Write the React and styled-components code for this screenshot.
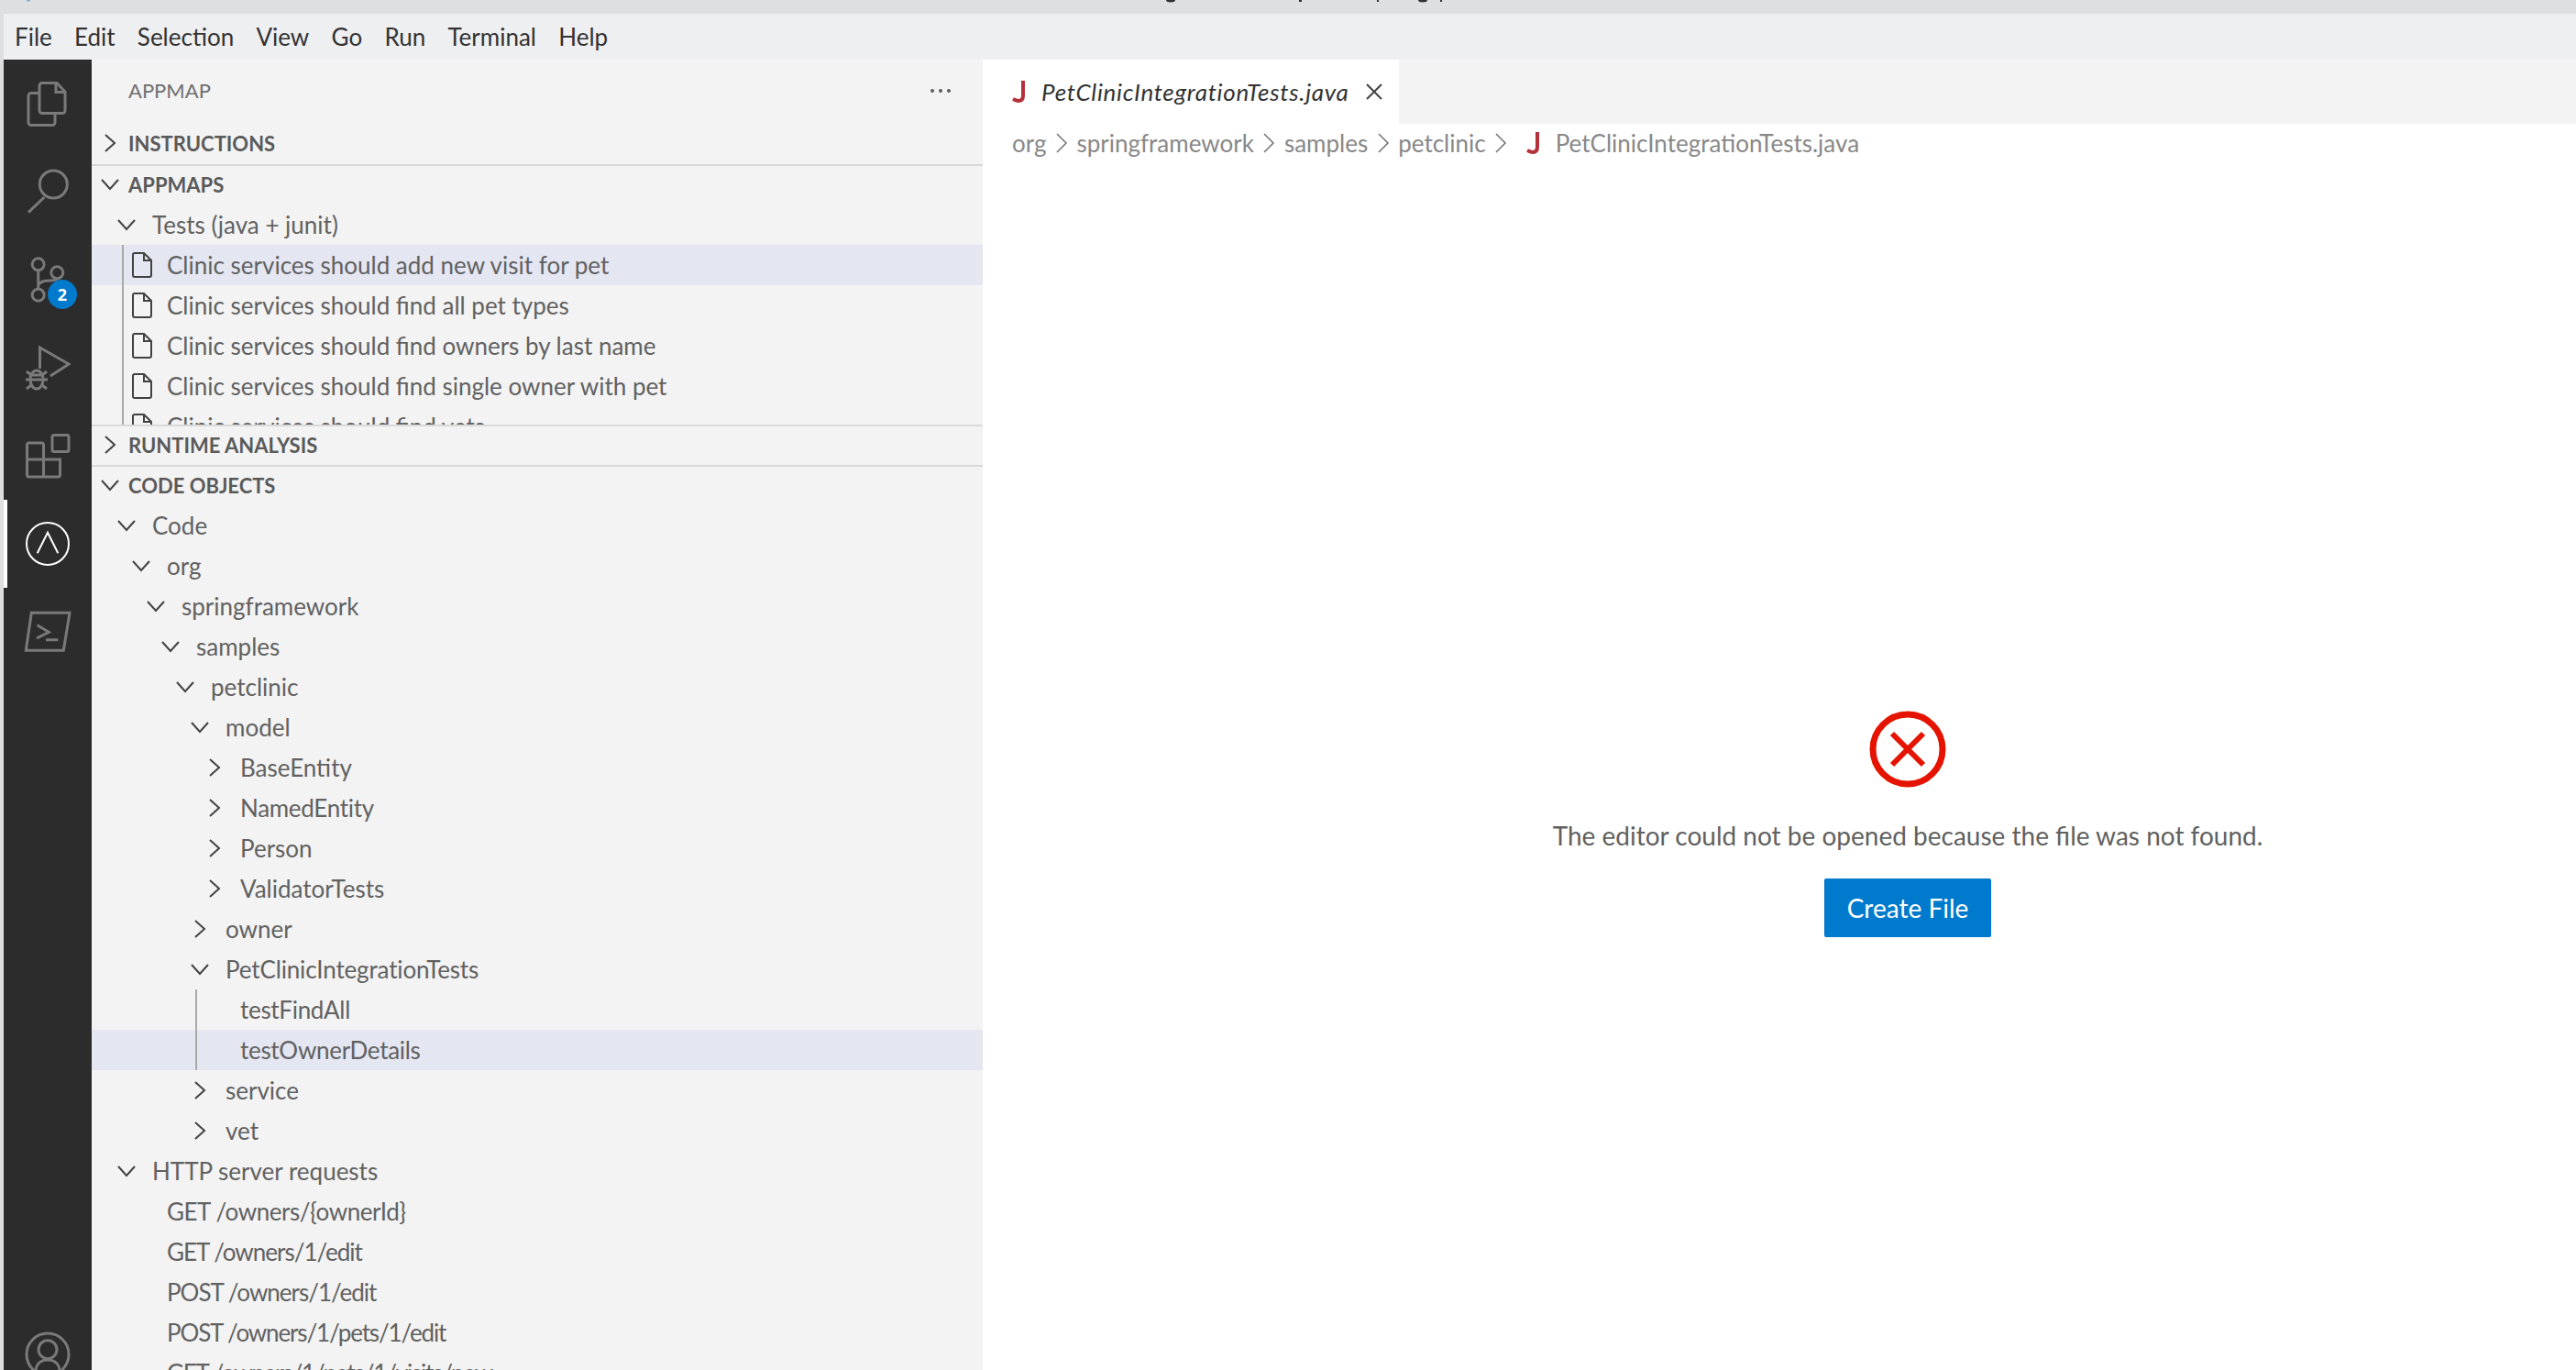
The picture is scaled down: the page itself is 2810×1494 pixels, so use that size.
import React from "react";
import styled, { createGlobalStyle } from "styled-components";

const Global = createGlobalStyle`
  html, body { margin: 0; padding: 0; background: #fff; overflow: hidden; }
  * { box-sizing: border-box; }
`;

const Window = styled.div`
  width: 2810px;
  height: 1494px;
  overflow: hidden;
  display: flex;
  flex-direction: column;
  background: #dedfe1;
  font-family: Lato, "Open Sans", sans-serif;
`;
const TitleBar = styled.div`
  height: 15px;
  flex: none;
  svg { display: block; }
`;
const Main = styled.div`
  flex: 1;
  min-height: 0;
  margin-left: 4px;
  display: flex;
  flex-direction: column;
`;
const MenuBar = styled.div`
  height: 50px;
  flex: none;
  display: flex;
  align-items: center;
  padding-left: 12px;
  gap: 24.25px;
  background: #eeeff1;
  color: #333;
  font-size: 26px;
`;
const Body = styled.div`
  flex: 1;
  min-height: 0;
  display: flex;
`;

const ActivityBar = styled.div`
  width: 96px;
  flex: none;
  background: #2c2c2c;
  display: flex;
  flex-direction: column;
  justify-content: space-between;
  overflow: hidden;
`;
const ActivityItem = styled.div`
  position: relative;
  height: 96px;
  display: flex;
  align-items: center;
  justify-content: center;
  color: ${p => (p.$active ? "#fff" : "#7a7a7a")};
  border-left: ${p => (p.$active ? "4px solid #fff" : "none")};
  padding-right: ${p => (p.$active ? "4px" : "0")};
`;
const AccountSlot = styled.div`
  margin-bottom: -31px;
`;
const Badge = styled.span`
  position: absolute;
  left: 48px;
  top: 48px;
  width: 32px;
  height: 32px;
  border-radius: 50%;
  background: #007acc;
  color: #fff;
  font: 700 18px "Open Sans", sans-serif;
  display: flex;
  align-items: center;
  justify-content: center;
`;

const Sidebar = styled.div`
  width: 972px;
  flex: none;
  background: #f3f3f3;
  color: #616161;
  font-size: 26px;
  overflow: hidden;
`;
const SidebarTitle = styled.div`
  height: 70px;
  display: flex;
  align-items: center;
  justify-content: space-between;
  padding: 0 35px 3px 40px;
  font-size: 22px;
  color: #6f6f6f;
`;
const Dots = styled.span`
  display: flex;
  gap: 5px;
  i {
    width: 4px;
    height: 4px;
    border-radius: 50%;
    background: #5a5a5a;
  }
`;
const PaneHeader = styled.div`
  height: 44px;
  display: flex;
  align-items: center;
  padding: 0 0 2px 10px;
  border-top: ${p => (p.$first ? "none" : "2px solid #d9d9d9")};
  font-size: 22px;
  font-weight: 700;
  color: #5a5a5a;
`;
const PaneBody = styled.div`
  height: ${p => (p.$height ? `${p.$height}px` : "auto")};
  overflow: hidden;
`;
const Row = styled.div`
  position: relative;
  height: 44px;
  display: flex;
  align-items: center;
  white-space: nowrap;
  padding-left: ${p => p.$depth * 16 + 12}px;
  padding-bottom: 1px;
  letter-spacing: ${p => p.$tracking || 0}px;
  background: ${p => (p.$selected ? "#e4e6f1" : "transparent")};
`;
const Twistie = styled.span`
  width: 38px;
  flex: none;
  padding-right: 18px;
  display: flex;
  align-items: center;
  justify-content: center;
  svg { flex: none; }
`;
const HeaderTwistie = styled(Twistie)`
  width: 30px;
  padding-right: 10px;
`;
const FileGlyph = styled.span`
  display: flex;
  width: 38px;
  flex: none;
`;
const Guide = styled.span`
  position: absolute;
  top: 0;
  bottom: 0;
  left: ${p => p.$left}px;
  width: 2px;
  background: #aaa;
`;

const Editor = styled.div`
  flex: 1;
  min-width: 0;
  background: #fff;
  display: flex;
  flex-direction: column;
`;
const TabStrip = styled.div`
  height: 70px;
  flex: none;
  display: flex;
  background: #f3f3f3;
`;
const Tab = styled.div`
  width: 454px;
  background: #fff;
  display: flex;
  align-items: center;
  padding-left: 32px;
  font-size: 26px;
  font-style: italic;
  letter-spacing: 0.7px;
  color: #333;
  white-space: nowrap;
`;
const TabLabel = styled.span`
  margin-left: 16px;
  width: 354px;
`;
const Crumbs = styled.div`
  height: 44px;
  flex: none;
  display: flex;
  align-items: center;
  padding: 0 0 2px 32px;
  font-size: 26px;
  color: #888;
  white-space: nowrap;
  svg { flex: none; }
`;
const CrumbSep = styled.span`
  display: flex;
  width: 33px;
  justify-content: center;
`;
const CrumbIcon = styled.span`
  display: flex;
  margin: 0 16px 0 11px;
`;
const Placeholder = styled.div`
  flex: 1;
  display: flex;
  flex-direction: column;
  align-items: center;
  padding: 596px 0 0 280px;
`;
const Message = styled.div`
  margin-top: 35px;
  font-size: 28px;
  color: #616161;
  white-space: nowrap;
`;
const CreateButton = styled.button`
  margin-top: 30px;
  width: 182px;
  height: 64px;
  border: 0;
  border-radius: 2px;
  background: #007acc;
  color: #fff;
  font: 28px Lato, sans-serif;
`;

const Down = () => (
  <svg width="20" height="14" viewBox="0 0 20 14" fill="none" stroke="#424242" strokeWidth="2">
    <path d="M1 2l9 10 9-10" />
  </svg>
);
const Right = () => (
  <svg width="14" height="20" viewBox="0 0 14 20" fill="none" stroke="#424242" strokeWidth="2">
    <path d="M2 1l10 9-10 9" />
  </svg>
);
const Crumb = () => (
  <CrumbSep>
    <svg width="14" height="24" viewBox="0 0 14 24" fill="none" stroke="#777" strokeWidth="1.6">
      <path d="M2 2l10 10L2 22" />
    </svg>
  </CrumbSep>
);
const FileIcon = () => (
  <FileGlyph>
    <svg width="22" height="28" viewBox="0 0 22 28" fill="none" stroke="#424242" strokeWidth="2">
      <path d="M3 1h10l8 8v16a2 2 0 0 1-2 2H3a2 2 0 0 1-2-2V3a2 2 0 0 1 2-2z" />
      <path d="M13 1v8h8" />
    </svg>
  </FileGlyph>
);
const JavaJ = () => (
  <svg width="16" height="24" viewBox="0 0 16 24" fill="none" stroke="#b5303a" strokeWidth="4">
    <path d="M12 0v16c0 4-2 6-5 6-2 0-4-1-6-2" />
  </svg>
);

const Icon = ({ children, stroke = 3 }) => (
  <svg width="48" height="48" viewBox="0 0 48 48" fill="none" stroke="currentColor" strokeWidth={stroke} style={{ overflow: "visible" }}>
    {children}
  </svg>
);

const topIcons = [
  <Icon>
    <path d="M14.7 12.6H6a3 3 0 0 0-3 3v29a3 3 0 0 0 3 3h23a3 3 0 0 0 3-3V35" />
    <path d="M18 1.5h16l9 9.5v20.5a3 3 0 0 1-3 3H18a3 3 0 0 1-3-3v-27a3 3 0 0 1 3-3z" />
    <path d="M33 1.5v10h10" />
  </Icon>,
  <Icon>
    <circle cx="30.3" cy="16" r="15" />
    <path d="M20.3 30L3 46.7" />
  </Icon>,
  <Icon>
    <circle cx="13.7" cy="7.3" r="6.5" />
    <circle cx="34.3" cy="16.3" r="6.5" />
    <circle cx="13.7" cy="40.7" r="6.5" />
    <path d="M13.7 14v20M13.7 32c0-6 6-7 12-7 5 0 8-1 8.6-2" />
  </Icon>,
  <Icon>
    <path d="M15.5 25V2L47 20 27 33" />
    <ellipse cx="12" cy="37" rx="7" ry="10" />
    <path d="M0 37h24M1 28l5 4M23 28l-5 4M1 47l5-4M23 47l-5-4M6 32h12" />
  </Icon>,
  <Icon>
    <path d="M3.5 10h14a2 2 0 0 1 2 2v16h18v17a2 2 0 0 1-2 2h-32a2 2 0 0 1-2-2V12a2 2 0 0 1 2-2z" />
    <path d="M1.5 28h18v19" />
    <rect x="29" y="1.5" width="18" height="18" rx="2" />
  </Icon>,
];

// [depth, twistie, label, flag, letter spacing]
const code = [
  [1, "d", "Code"], [2, "d", "org"], [3, "d", "springframework"], [4, "d", "samples"],
  [5, "d", "petclinic"], [6, "d", "model"], [7, "r", "BaseEntity"], [7, "r", "NamedEntity", "", -0.3],
  [7, "r", "Person"], [7, "r", "ValidatorTests"], [6, "r", "owner"],
  [6, "d", "PetClinicIntegrationTests", "", -0.15], [7, "", "testFindAll", "g", -0.3], [7, "", "testOwnerDetails", "gs", -0.3],
  [6, "r", "service"], [6, "r", "vet"], [1, "d", "HTTP server requests"],
  [2, "", "GET /owners/{ownerId}", "", -0.45], [2, "", "GET /owners/1/edit", "", -1], [2, "", "POST /owners/1/edit", "", -1],
  [2, "", "POST /owners/1/pets/1/edit", "", -1.15], [2, "", "GET /owners/1/pets/1/visits/new", "", -1.2],
];

const tests = [
  "Clinic services should add new visit for pet",
  "Clinic services should find all pet types",
  "Clinic services should find owners by last name",
  "Clinic services should find single owner with pet",
  "Clinic services should find vets",
];

export default function App() {
  return (
    <Window>
      <Global />
      <TitleBar>
        {/* bottoms of the clipped window title and icon */}
        <svg width="2810" height="15" viewBox="0 0 2810 15">
          <rect x="29" y="0" width="4" height="1.5" fill="#7fb4d6" />
          <g fill="#333">
            <ellipse cx="1277" cy="0" rx="5" ry="2.5" />
            <rect x="1417" y="0" width="3" height="2" />
            <rect x="1502" y="0" width="2" height="2" />
            <ellipse cx="1552" cy="0" rx="5" ry="2.5" />
            <rect x="1571" y="0" width="2" height="2" />
          </g>
        </svg>
      </TitleBar>
      <Main>
        <MenuBar>
          {["File", "Edit", "Selection", "View", "Go", "Run", "Terminal", "Help"].map(m => <span key={m}>{m}</span>)}
        </MenuBar>
        <Body>
          <ActivityBar>
            <div>
              {topIcons.map((ic, i) => (
                <ActivityItem key={i}>
                  {ic}
                  {i === 2 && <Badge>2</Badge>}
                </ActivityItem>
              ))}
              <ActivityItem $active>
                <Icon stroke={2}>
                  <circle cx="24" cy="24" r="23" />
                  <path d="M12.7 34.3L24 11.7l11.3 22.6" />
                </Icon>
              </ActivityItem>
              <ActivityItem>
                <Icon>
                  <path d="M6.3 3.3H48l-6.7 41H.3z" />
                  <path d="M12.7 16.7l12.6 7.6L12 31M22 32.7h13.3" />
                </Icon>
              </ActivityItem>
            </div>
            <AccountSlot>
              <ActivityItem>
                <Icon>
                  <circle cx="24" cy="24" r="23" />
                  <circle cx="24" cy="18.7" r="10" />
                  <path d="M10.7 44c0-9 5.3-14 13.3-14s13.3 5 13.3 14" />
                </Icon>
              </ActivityItem>
            </AccountSlot>
          </ActivityBar>

          <Sidebar>
            <SidebarTitle>
              APPMAP
              <Dots><i /><i /><i /></Dots>
            </SidebarTitle>
            <PaneHeader $first><HeaderTwistie><Right /></HeaderTwistie>INSTRUCTIONS</PaneHeader>
            <PaneHeader><HeaderTwistie><Down /></HeaderTwistie>APPMAPS</PaneHeader>
            <PaneBody $height={240}>
              <Row $depth={1}><Twistie><Down /></Twistie>Tests (java + junit)</Row>
              {tests.map((t, i) => (
                <Row key={t} $depth={2} $selected={i === 0}>
                  <Guide $left={33} />
                  <FileIcon />
                  {t}
                </Row>
              ))}
            </PaneBody>
            <PaneHeader><HeaderTwistie><Right /></HeaderTwistie>RUNTIME ANALYSIS</PaneHeader>
            <PaneHeader><HeaderTwistie><Down /></HeaderTwistie>CODE OBJECTS</PaneHeader>
            <PaneBody>
              {code.map(([d, tw, label, flag, tracking]) => (
                <Row key={label} $depth={d} $selected={flag === "gs"} $tracking={tracking}>
                  {flag && <Guide $left={113} />}
                  <Twistie>{tw === "d" ? <Down /> : tw === "r" ? <Right /> : null}</Twistie>
                  {label}
                </Row>
              ))}
            </PaneBody>
          </Sidebar>

          <Editor>
            <TabStrip>
              <Tab>
                <JavaJ />
                <TabLabel>PetClinicIntegrationTests.java</TabLabel>
                <svg width="18" height="18" viewBox="0 0 18 18" stroke="#424242" strokeWidth="2">
                  <path d="M1 1l16 16M17 1L1 17" />
                </svg>
              </Tab>
            </TabStrip>
            <Crumbs>
              org<Crumb />springframework<Crumb />samples<Crumb />petclinic<Crumb />
              <CrumbIcon><JavaJ /></CrumbIcon>
              <span>PetClinicIntegrationTests.java</span>
            </Crumbs>
            <Placeholder>
              <svg width="84" height="84" viewBox="0 0 84 84" fill="none" stroke="#e51400" strokeWidth="7">
                <circle cx="42" cy="42" r="38" />
                <path d="M25 25l34 34M59 25L25 59" strokeWidth="6" />
              </svg>
              <Message>The editor could not be opened because the file was not found.</Message>
              <CreateButton>Create File</CreateButton>
            </Placeholder>
          </Editor>
        </Body>
      </Main>
    </Window>
  );
}
